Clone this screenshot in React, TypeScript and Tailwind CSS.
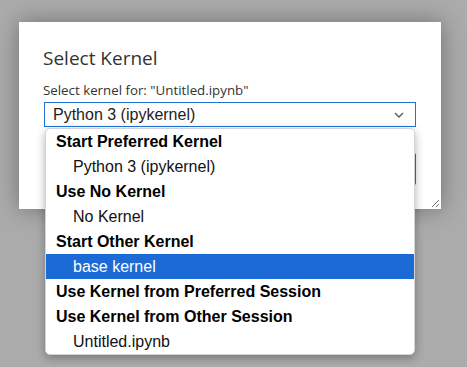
import React from "react";

type Row = { label: string; group?: boolean; active?: boolean };

const rows: Row[] = [
  { label: "Start Preferred Kernel", group: true },
  { label: "Python 3 (ipykernel)" },
  { label: "Use No Kernel", group: true },
  { label: "No Kernel" },
  { label: "Start Other Kernel", group: true },
  { label: "base kernel", active: true },
  { label: "Use Kernel from Preferred Session", group: true },
  { label: "Use Kernel from Other Session", group: true },
  { label: "Untitled.ipynb" },
];

export default function App() {
  return (
    <div className="w-[467px] h-[367px] bg-[#ababab] overflow-hidden pt-[22px] pl-[19px]">
      <div className="relative w-[422px] h-[187px] bg-white shadow-[0_0_22px_rgba(0,0,0,0.35)] px-[25px] pt-[23px] font-['Open_Sans',sans-serif] text-[#333]">
        <h1 className="text-[19px] leading-[26px] -ml-[1px]">Select Kernel</h1>
        <div className="mt-[10px] text-[13.3px] leading-[18px] -ml-[1px]">
          Select kernel for: "Untitled.ipynb"
        </div>
        <div className="relative mt-[3px]">
          <div className="h-[25px] border border-[#1f72d8] bg-white flex items-center justify-between pl-[8px] pr-[10px] font-['Liberation_Sans',Arial,sans-serif] text-[16px] text-[#222]">
            <span>Python 3 (ipykernel)</span>
            <svg width="10" height="6" viewBox="0 0 10 6" className="mr-[1px]">
              <path d="M1 1 L5 5 L9 1" fill="none" stroke="#555" strokeWidth="1.3" />
            </svg>
          </div>

          <div className="absolute z-10 top-[26px] left-[1px] right-[1px] bg-white rounded-[5px] border border-[#d4d4d4] shadow-[0_3px_10px_rgba(0,0,0,0.3)] overflow-hidden font-['Liberation_Sans',Arial,sans-serif] text-[16px]">
            {rows.map((r) => (
              <div
                key={r.label}
                className={
                  "h-[25px] leading-[25px] whitespace-nowrap " +
                  (r.group ? "pl-[10px] font-bold text-black " : "pl-[27px] text-[#111] ") +
                  (r.active ? "bg-[#1c6ad6] text-white" : "")
                }
              >
                {r.label}
              </div>
            ))}
          </div>
        </div>

        <div className="mt-[26px] flex justify-end gap-2">
          <button className="h-[32px] px-4 rounded-[2px] border border-[#ccc] text-[13px] text-[#333] bg-white">Cancel</button>
          <button className="h-[32px] px-4 rounded-[2px] bg-[#1a73e8] text-white text-[13px]">Select</button>
        </div>

        <svg width="9" height="9" viewBox="0 0 9 9" className="absolute right-[1px] bottom-[1px]">
          <path d="M8 1 L1 8 M8 5 L5 8" stroke="#777" strokeWidth="1" />
        </svg>
      </div>
    </div>
  );
}
